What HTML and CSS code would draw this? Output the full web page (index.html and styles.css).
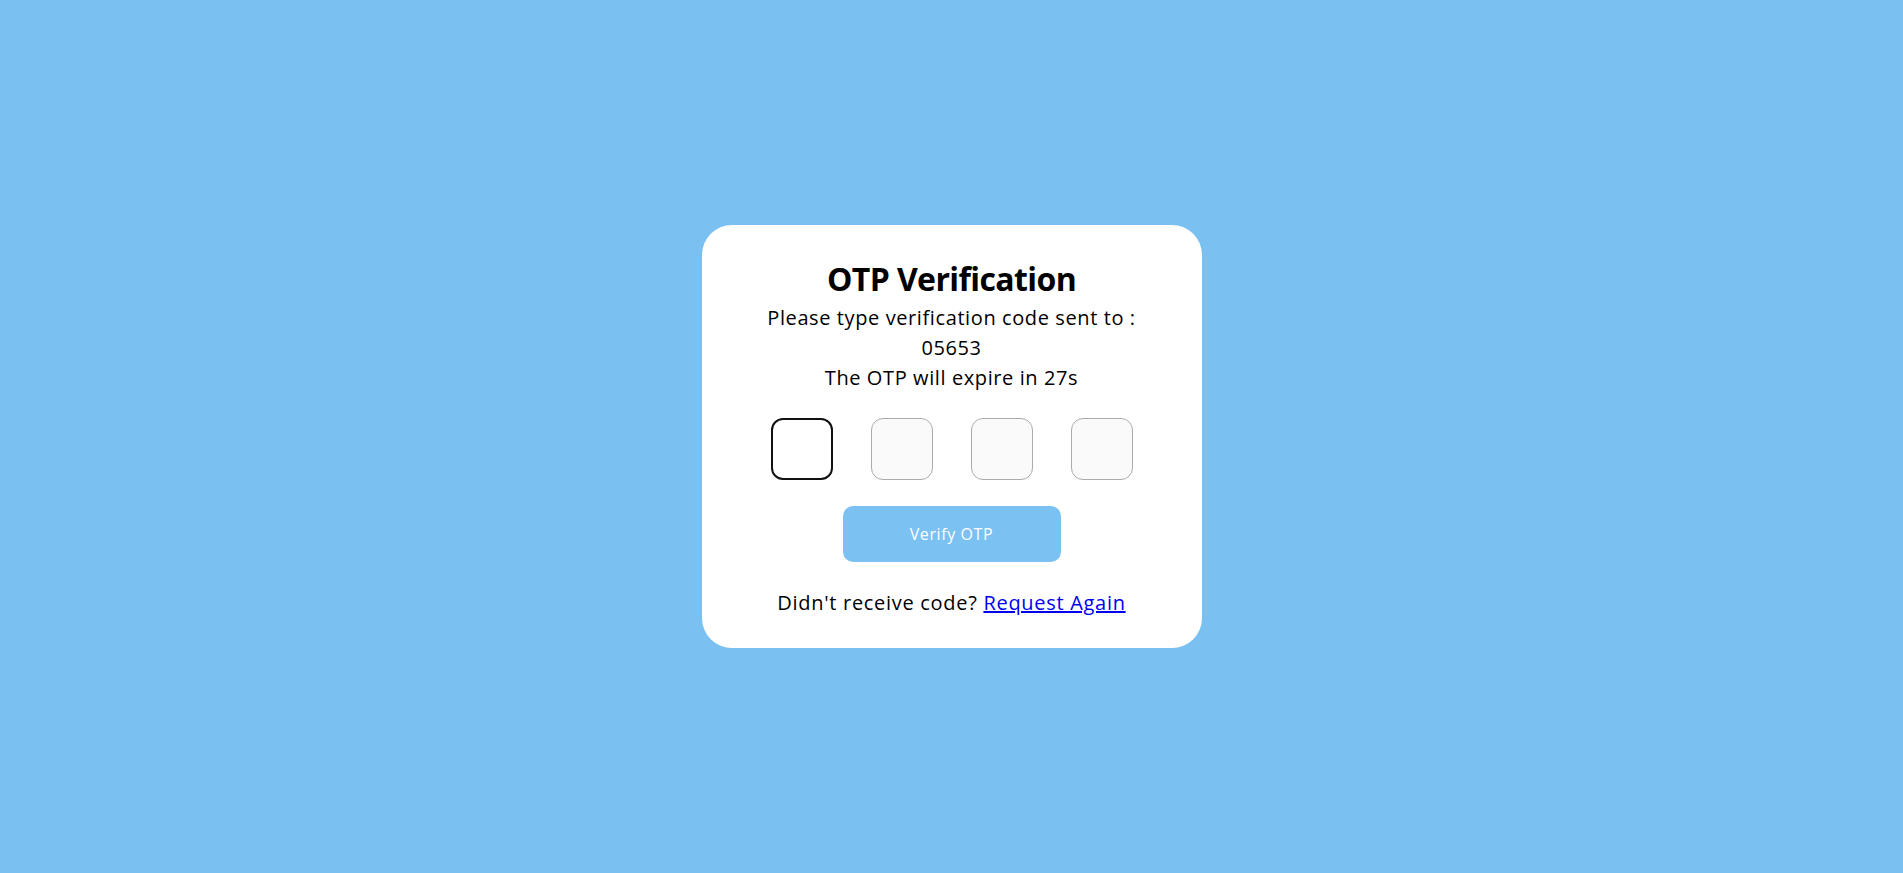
FILE: index.html
```html
<!DOCTYPE html>
<html lang="en">
<head>
<meta charset="utf-8">
<title>OTP Verification</title>
<link rel="stylesheet" href="styles.css">
</head>
<body>
<main class="page">
  <section class="card">
    <h1 class="title">OTP Verification</h1>
    <p class="info">Please type verification code sent to :<br>05653<br>The OTP will expire in 27s</p>
    <div class="otp-row">
      <input class="otp-box otp-box--active" type="text" maxlength="1">
      <input class="otp-box" type="text" maxlength="1">
      <input class="otp-box" type="text" maxlength="1">
      <input class="otp-box" type="text" maxlength="1">
    </div>
    <button class="verify-btn" type="button">Verify OTP</button>
    <p class="resend">Didn't receive code? <a href="#" class="resend-link">Request Again</a></p>
  </section>
</main>
</body>
</html>
```
FILE: styles.css
```css
* { box-sizing: border-box; }
html, body { margin: 0; padding: 0; }
body {
  background: #7ac1f2;
  font-family: "Open Sans", "Noto Sans", sans-serif;
  color: #000;
}
.page {
  height: 873px;
  display: flex;
  align-items: center;
  justify-content: center;
}
.card {
  width: 500px;
  background: #fff;
  border-radius: 30px;
  padding: 30px 0 30px;
  display: flex;
  flex-direction: column;
  align-items: center;
}
.title {
  margin: 0;
  font-size: 32px;
  line-height: 48px;
  font-weight: 700;
  letter-spacing: -0.6px;
}
.info {
  margin: 0;
  font-size: 20px;
  line-height: 30px;
  text-align: center;
  letter-spacing: 0.6px;
}
.otp-row {
  display: flex;
  gap: 38px;
  margin-top: 25px;
}
.otp-box {
  width: 62px;
  height: 62px;
  border: 1px solid #ababab;
  border-radius: 12px;
  background: #fafafa;
  outline: none;
  padding: 0;
  font: inherit;
  text-align: center;
}
.otp-box--active {
  border: 2px solid #111;
  background: #fff;
}
.verify-btn {
  margin-top: 26px;
  width: 218px;
  height: 56px;
  border: none;
  border-radius: 10px;
  background: #7bc1f2;
  color: #fff;
  font-family: inherit;
  font-size: 16px;
  letter-spacing: 0.6px;
  cursor: pointer;
}
.resend {
  margin: 26px 0 0;
  font-size: 20px;
  line-height: 30px;
  letter-spacing: 0.7px;
}
.resend-link {
  color: #0000ee;
  text-decoration: underline;
}
```
